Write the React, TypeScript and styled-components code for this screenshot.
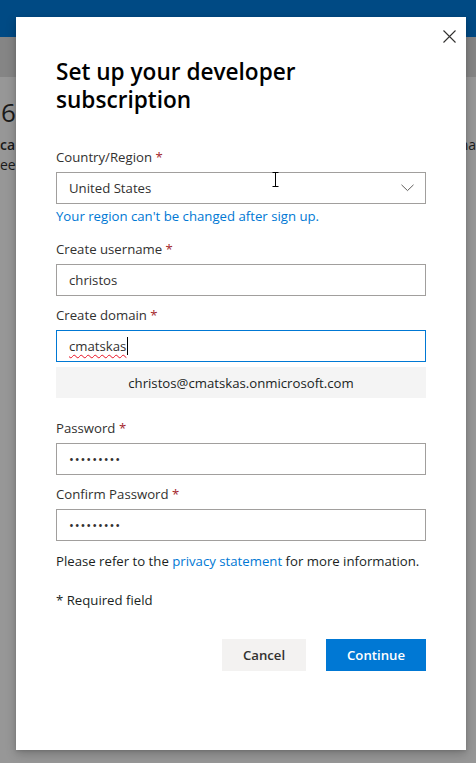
import React from "react";
import styled, { createGlobalStyle } from "styled-components";

const Global = createGlobalStyle`
  html, body { margin: 0; padding: 0; }
  body {
    width: 476px; height: 763px; overflow: hidden;
    background: #979797;
    font-family: "Segoe UI", "Open Sans", "Noto Sans", sans-serif;
  }
`;

const Page = styled.div`
  position: relative;
  width: 476px;
  height: 763px;
  display: flex;
  flex-direction: column;
`;

const TopBar = styled.div`
  height: 37px;
  background: #004a84;
`;

const Band = styled.div`
  height: 40px;
  background: #858585;
`;

const BackContent = styled.div`
  display: flex;
  justify-content: space-between;
  padding-top: 20px;
  color: #1a1a1a;
  font-size: 14px;
  white-space: nowrap;
`;

const BackCol = styled.div<{ $align?: string }>`
  display: flex;
  flex-direction: column;
  align-items: ${(p) => p.$align || "flex-start"};
`;

const BigDigit = styled.div`
  font-size: 26px;
  line-height: 30px;
  padding-left: 1px;
`;

const BackLine = styled.div<{ $bold?: boolean; $top?: number }>`
  font-weight: ${(p) => (p.$bold ? 600 : 400)};
  line-height: 20px;
  margin-top: ${(p) => p.$top ?? 0}px;
`;

const Dialog = styled.div`
  position: absolute;
  left: 16px;
  top: 17px;
  width: 450px;
  height: 733px;
  box-sizing: border-box;
  background: #fff;
  box-shadow: 0 4px 10px rgba(0, 0, 0, 0.22), 0 1px 3px rgba(0, 0, 0, 0.12);
  padding: 40px 40px 0 40px;
  display: flex;
  flex-direction: column;
`;

const CloseBtn = styled.button`
  position: absolute;
  top: 3px;
  right: 1px;
  width: 32px;
  height: 32px;
  border: 0;
  background: transparent;
  padding: 0;
  display: flex;
  align-items: center;
  justify-content: center;
  cursor: pointer;
`;

const Title = styled.h1`
  margin: 1px 0 0;
  font-size: 22.6px;
  line-height: 28px;
  font-weight: 600;
  color: #000;
  width: 300px;
`;

const Label = styled.label<{ $gap?: number }>`
  display: block;
  margin-top: ${(p) => p.$gap ?? 4}px;
  padding: 5px 0;
  line-height: 20px;
  font-size: 13.2px;
  color: #323130;
`;

const Req = styled.span`
  color: #a4262c;
`;

const Field = styled.div<{ $focused?: boolean }>`
  position: relative;
  height: 32px;
  box-sizing: border-box;
  border: 1px solid ${(p) => (p.$focused ? "#0078d4" : "#a19f9d")};
  display: flex;
  align-items: center;
  justify-content: space-between;
  padding: 0 11px 0 12px;
  font-size: 13.2px;
  color: #323130;
`;

const Dots = styled.span`
  font-size: 13px;
  letter-spacing: 0.9px;
  color: #323130;
`;

const Squiggle = styled.span`
  text-decoration: underline wavy #e81123;
  text-decoration-thickness: 1px;
  text-underline-offset: 3px;
`;

const Caret = styled.span`
  display: inline-block;
  width: 1px;
  height: 18px;
  background: #000;
  vertical-align: middle;
  margin-left: 1px;
`;

const FieldText = styled.span`
  display: flex;
  align-items: center;
`;

const Helper = styled.div`
  margin-top: 2px;
  line-height: 20px;
  font-size: 13.2px;
  color: #0078d4;
`;

const Preview = styled.div`
  margin-top: 5px;
  height: 31px;
  background: #f4f4f4;
  display: flex;
  align-items: center;
  justify-content: center;
  font-size: 13.2px;
  color: #201f1e;
`;

const Text = styled.p<{ $gap: number }>`
  margin: ${(p) => p.$gap}px 0 0;
  line-height: 20px;
  font-size: 13.2px;
  color: #201f1e;
`;

const Link = styled.a`
  color: #0078d4;
  text-decoration: none;
`;

const Actions = styled.div`
  margin-top: 29px;
  display: flex;
  justify-content: flex-end;
  gap: 20px;
`;

const Button = styled.button<{ $primary?: boolean }>`
  height: 32px;
  min-width: ${(p) => (p.$primary ? 100 : 84)}px;
  padding: 0 16px;
  border: 0;
  font-family: inherit;
  font-size: 13.2px;
  font-weight: 600;
  background: ${(p) => (p.$primary ? "#0078d4" : "#f3f2f1")};
  color: ${(p) => (p.$primary ? "#fff" : "#323130")};
  cursor: pointer;
`;

const IBeam = styled.svg`
  position: absolute;
  left: 215px;
  top: -1px;
`;

const Chevron = () => (
  <svg width="13" height="8" viewBox="0 0 13 8">
    <path d="M0.5 0.8 L6.5 6.6 L12.5 0.8" fill="none" stroke="#605e5c" strokeWidth="1" />
  </svg>
);

export default function App() {
  return (
    <>
      <Global />
      <Page>
        <TopBar />
        <Band />
        <BackContent>
          <BackCol>
            <BigDigit>6</BigDigit>
            <BackLine $bold $top={8}>ca</BackLine>
            <BackLine>ee</BackLine>
          </BackCol>
          <BackCol $align="flex-end">
            <BackLine $top={38}>na</BackLine>
          </BackCol>
        </BackContent>

        <Dialog>
          <CloseBtn aria-label="Close">
            <svg width="13" height="13" viewBox="0 0 13 13">
              <path d="M0.5 0.5 L12.5 12.5 M12.5 0.5 L0.5 12.5" stroke="#323130" strokeWidth="1.1" fill="none" />
            </svg>
          </CloseBtn>
          <Title>Set up your developer subscription</Title>

          <Label $gap={28}>
            Country/Region <Req>*</Req>
          </Label>
          <Field>
            <span>United States</span>
            <Chevron />
            <IBeam width="7" height="15" viewBox="0 0 7 15">
              <path d="M0.5 0.5 H6.5 M3.5 0.5 V14.5 M0.5 14.5 H6.5" stroke="#000" strokeWidth="1" fill="none" />
            </IBeam>
          </Field>
          <Helper>Your region can't be changed after sign up.</Helper>

          <Label $gap={8}>
            Create username <Req>*</Req>
          </Label>
          <Field>
            <span>christos</span>
          </Field>

          <Label>
            Create domain <Req>*</Req>
          </Label>
          <Field $focused>
            <FieldText>
              <Squiggle>cmatskas</Squiggle>
              <Caret />
            </FieldText>
          </Field>
          <Preview>christos@cmatskas.onmicrosoft.com</Preview>

          <Label $gap={15}>
            Password <Req>*</Req>
          </Label>
          <Field>
            <Dots>•••••••••</Dots>
          </Field>

          <Label>
            Confirm Password <Req>*</Req>
          </Label>
          <Field>
            <Dots>•••••••••</Dots>
          </Field>

          <Text $gap={10}>
            Please refer to the <Link href="#">privacy statement</Link> for more information.
          </Text>
          <Text $gap={19}>* Required field</Text>

          <Actions>
            <Button>Cancel</Button>
            <Button $primary>Continue</Button>
          </Actions>
        </Dialog>
      </Page>
    </>
  );
}
